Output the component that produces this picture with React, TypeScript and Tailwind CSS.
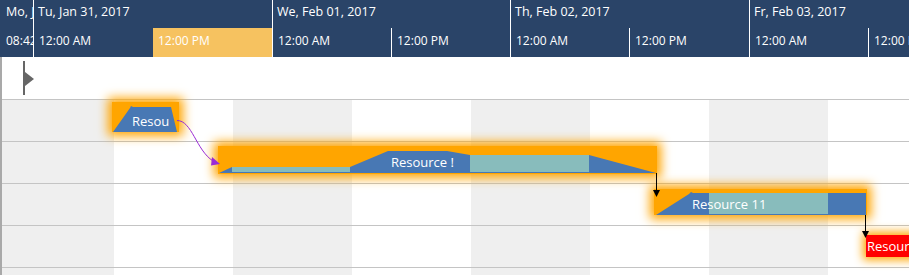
import React from "react";

const topCells = [
  { label: "Mo, Jan 30, 2017", w: "w-[33px]", first: true },
  { label: "Tu, Jan 31, 2017", w: "w-[239px]" },
  { label: "We, Feb 01, 2017", w: "w-[238px]" },
  { label: "Th, Feb 02, 2017", w: "w-[239px]" },
  { label: "Fr, Feb 03, 2017", w: "flex-1" },
];

const bottomCells = [
  { label: "08:42 AM", w: "w-[33px]", first: true },
  { label: "12:00 AM", w: "w-[120px]" },
  { label: "12:00 PM", w: "w-[119px]", hl: true },
  { label: "12:00 AM", w: "w-[119px]" },
  { label: "12:00 PM", w: "w-[119px]" },
  { label: "12:00 AM", w: "w-[119px]" },
  { label: "12:00 PM", w: "w-[120px]" },
  { label: "12:00 AM", w: "w-[119px]" },
  { label: "12:00 PM", w: "flex-1" },
];

function StripeRow() {
  return (
    <div className="flex h-[42px] border-b border-[#c4c4c4]">
      <div className="w-[112px] bg-[#efefef]" />
      <div className="w-[119px] bg-white" />
      <div className="w-[119px] bg-[#efefef]" />
      <div className="w-[119px] bg-white" />
      <div className="w-[119px] bg-[#efefef]" />
      <div className="w-[119px] bg-white" />
      <div className="w-[119px] bg-[#efefef]" />
      <div className="flex-1 bg-white" />
    </div>
  );
}

export default function App() {
  return (
    <div className="relative w-[909px] h-[275px] overflow-hidden bg-white font-['Open_Sans',sans-serif]">
      {/* Header */}
      <div className="h-[57px] bg-[#2a4468] text-white flex flex-col">
        <div className="flex h-[28px]">
          {topCells.map((c, i) => (
            <div
              key={i}
              className={`${c.w} shrink-0 overflow-hidden whitespace-nowrap text-[12.5px] leading-[17px] pt-[3px] ${
                c.first ? "pl-[6px]" : "pl-[4px] border-l border-white"
              }`}
            >
              {c.label}
            </div>
          ))}
        </div>
        <div className="flex h-[29px]">
          {bottomCells.map((c, i) => (
            <div
              key={i}
              className={`${c.w} shrink-0 overflow-hidden whitespace-nowrap text-[12px] leading-[16px] pt-[5px] ${
                c.first ? "pl-[6px]" : c.hl ? "pl-[5px] bg-[#f6c260]" : "pl-[5px] border-l border-white"
              }`}
            >
              {c.label}
            </div>
          ))}
        </div>
      </div>

      {/* Body */}
      <div className="border-l-2 border-[#a9a9a9]">
        <div className="h-[43px] border-b border-[#c4c4c4] bg-white flex">
          <svg width="14" height="42" className="ml-[21px] block">
            <rect x="0" y="4" width="2" height="34" fill="#666666" />
            <polygon points="2,15 11,22 2,29" fill="#666666" />
          </svg>
        </div>
        <StripeRow />
        <StripeRow />
        <StripeRow />
        <StripeRow />
        <StripeRow />
      </div>

      {/* Task glows */}
      <div className="absolute left-[112px] top-[102px] w-[67px] h-[30px] bg-[#ffa500] shadow-[0_0_10px_4px_#ffa500]" />
      <div className="absolute left-[218px] top-[146px] w-[439px] h-[28px] bg-[#ffa500] shadow-[0_0_10px_4px_#ffa500]" />
      <div className="absolute left-[654px] top-[189px] w-[213px] h-[26px] bg-[#ffa500] shadow-[0_0_10px_4px_#ffa500]" />
      <div className="absolute left-[866px] top-[235px] w-[60px] h-[22px] bg-[#ff0000] shadow-[0_0_10px_3px_#ffa500]" />

      {/* Shapes, text and connectors */}
      <svg className="absolute left-0 top-0 pointer-events-none" width="909" height="275">
        {/* Task 1 */}
        <polygon points="113,132 130,108 131,106 133,107 171,107 177,132" fill="#4878b4" />
        <text x="132" y="126" fill="white" fontSize="13">Resou</text>

        {/* Task 2 */}
        <polygon
          points="219,173 232,167 350,167 388,151 447,151 470,155 589,155 656,173"
          fill="#4878b4"
        />
        <rect x="232" y="167" width="118" height="5" fill="#88bcbc" />
        <rect x="470" y="155" width="119" height="17" fill="#88bcbc" />
        <text x="391" y="167" fill="white" fontSize="13">Resource !</text>

        {/* Task 3 */}
        <polygon points="656,215 689,194 691,192 693,193 866,193 866,215" fill="#4878b4" />
        <rect x="709" y="193" width="119" height="21" fill="#88bcbc" />
        <text x="692" y="209" fill="white" fontSize="13">Resource 11</text>

        {/* Task 4 */}
        <text x="867" y="251" fill="white" fontSize="13">Resour</text>

        {/* Connectors */}
        <path d="M177 120.5 C 192 120.5, 196 150, 213 161" stroke="#9a2bd6" strokeWidth="1" fill="none" />
        <polygon points="220,164 212,157 211,165.5" fill="#9a2bd6" />

        <line x1="656.5" y1="173" x2="656.5" y2="191" stroke="black" strokeWidth="1" />
        <polygon points="653,190 660,190 656.5,197" fill="black" />

        <line x1="865.5" y1="215" x2="865.5" y2="232" stroke="black" strokeWidth="1" />
        <polygon points="862,231 869,231 865.5,238" fill="black" />
      </svg>
    </div>
  );
}
